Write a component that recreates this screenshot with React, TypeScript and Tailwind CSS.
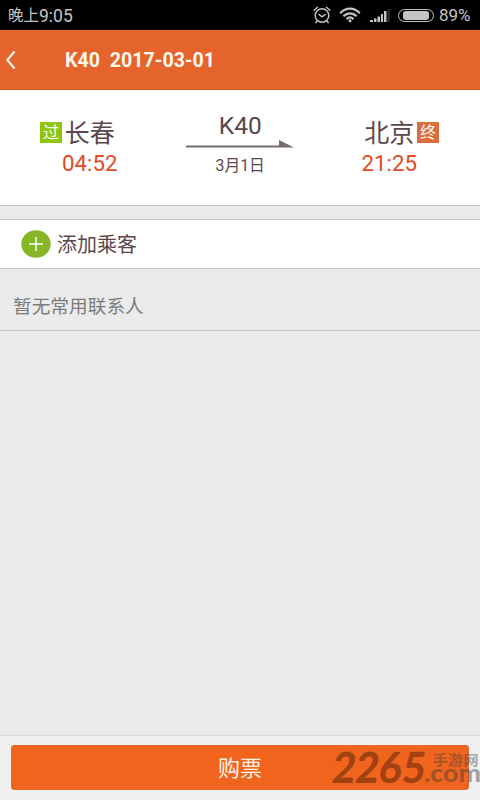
interface StationProps {
  name: string
  time: string
}

const trip = {
  train: 'K40',
  date: '2017-03-01',
  shortDate: '3月1日',
  from: { name: '长春', time: '04:52' },
  to: { name: '北京', time: '21:25' },
}

function StatusBar() {
  return (
    <div className="flex h-[30px] shrink-0 items-center bg-black pl-2 pr-[6px] text-[#c4c4c4]">
      <span className="flex items-center whitespace-nowrap leading-[30px]">
        <span className="pt-[3px] text-[15.5px] leading-[27px]">晚上</span>
        <span className="pt-[3px] text-[17.5px] leading-[27px]">9:05</span>
      </span>
      <div className="ml-auto flex items-center">
        <svg width="18" height="18" viewBox="0 0 18 18" fill="none" stroke="currentColor" strokeWidth="1.5" strokeLinecap="round">
          <circle cx="9" cy="9.5" r="6.8" />
          <path d="M6 8.5l3 2.3 3.2-2.3M1.2 4.2L4.5 1.3M16.8 4.2l-3.3-2.9M4.2 15l-1.4 1.6M13.8 15l1.4 1.6" />
        </svg>
        <svg className="ml-[8px]" width="22" height="16" viewBox="0 0 22 16" fill="none" stroke="currentColor" strokeWidth="2.2">
          <path d="M1.2 6.2C7 .2 15 .2 20.8 6.2M4.4 9.3c4-4 9.2-4 13.2 0M7.5 12.1c2.1-2 4.9-2 7 0" />
          <circle cx="11" cy="13.8" r="1.5" fill="currentColor" stroke="none" />
        </svg>
        <svg className="ml-[9px]" width="20" height="14" viewBox="0 0 20 14" fill="currentColor">
          <path d="M0 12h3v2H0zM4 10.500h2.500V14H4zM7.500 8.500H10V14H7.500zM11 6h2v8h-2zM14 3h2.500v11H14z" />
          <path d="M17.500 1h2v13h-2z" fill="#333" />
        </svg>
        <div className="ml-[8px] h-[13px] w-9 rounded-full border-[1.5px] border-[#c4c4c4] px-[4px] py-px">
          <div className="h-full rounded-[3px] bg-[#c4c4c4]" />
        </div>
        <span className="ml-[5px] w-[35px] whitespace-nowrap pt-px text-[17px] leading-[29px]">89%</span>
      </div>
    </div>
  )
}

function Header() {
  return (
    <header className="flex h-[60px] shrink-0 items-center border-b border-[#d55a22] bg-[#e4642b] text-[#fff8ee]">
      <svg className="ml-[5px]" width="12" height="20" viewBox="0 0 12 20" fill="none" stroke="currentColor" strokeWidth="2.1">
        <path d="M9.5 1.5L2.3 10l7.2 8.5" />
      </svg>
      <h1 className="ml-[48px] whitespace-pre pt-[2px] text-[19.6px] font-bold">
        {trip.train}
        {'  '}
        {trip.date}
      </h1>
    </header>
  )
}

function Station({ name, time }: StationProps) {
  return (
    <div className="flex flex-col items-center">
      <span className="text-[25px] leading-[34px]">{name}</span>
      <span className="text-[22.3px] leading-[25px] text-[#e34a25]">{time}</span>
    </div>
  )
}

function TripCard() {
  return (
    <section className="flex h-[116px] shrink-0 justify-between border-b border-[#c6c6c6] bg-white pl-[40px] pr-[41px] pt-[27px] text-[#5a474b]">
      <div className="flex w-[79px]">
        <span className="mt-[5px] flex h-[21px] w-[22px] shrink-0 items-center justify-center bg-[#8fc60c] text-[16px] leading-none text-white">过</span>
        <Station {...trip.from} />
      </div>
      <div className="-mt-[7px] flex w-[110px] flex-col items-center">
        <span className="text-[24.5px] leading-[32px]">{trip.train}</span>
        <svg className="-mt-[2px]" width="110" height="10" viewBox="0 0 110 10">
          <path d="M1 5.500h93V0l15 7.500H1z" fill="#746c70" />
        </svg>
        <span className="mt-[5px] text-[15.8px] leading-[22px]">{trip.shortDate}</span>
      </div>
      <div className="flex">
        <Station {...trip.to} />
        <span className="mt-[5px] flex h-[21px] w-[22px] shrink-0 items-center justify-center bg-[#d96d3d] text-[16px] leading-none text-white">终</span>
      </div>
    </section>
  )
}

function Watermark() {
  return (
    <svg className="pointer-events-none absolute bottom-0 right-0" width="150" height="70" viewBox="330 730 150 70">
      <g fontFamily="Lato" fontWeight="900" fill="#4a1d08" fillOpacity="0.48">
        <text transform="translate(331 782.500) skewX(-7)" fontSize="43" textLength="93" lengthAdjust="spacingAndGlyphs">2265</text>
        <text x="424" y="782" fontSize="24" textLength="57" lengthAdjust="spacingAndGlyphs" fill="#3c3c3c" fillOpacity="0.45">.com</text>
      </g>
      <text x="432.500" y="765" fontFamily="Noto Sans CJK SC" fontSize="14" fontWeight="700" textLength="46" lengthAdjust="spacingAndGlyphs" fill="#3c3c3c" fillOpacity="0.42">手游网</text>
    </svg>
  )
}

export default function App() {
  return (
    <div className="relative flex h-[800px] w-[480px] flex-col overflow-hidden bg-[#ebebeb] font-[Roboto,'Noto_Sans_CJK_SC',sans-serif]">
      <StatusBar />
      <Header />
      <TripCard />
      <button className="mt-[13px] flex h-[50px] shrink-0 items-center border-y border-[#c6c6c6] bg-white pl-[21px] text-[20px] text-[#5a474b]">
        <svg width="30" height="28" viewBox="0 0 30 28">
          <ellipse cx="15" cy="14" rx="14.700" ry="13.800" fill="#86b526" />
          <path d="M8 14h14M15 7v14" stroke="#fff" strokeWidth="1.4" />
        </svg>
        <span className="ml-[6px] pt-[2px]">添加乘客</span>
      </button>
      <div className="flex h-[62px] shrink-0 items-center border-b border-[#c6c6c6] pl-[13px] pt-[16px] text-[18.7px] text-[#7b7b7b]">
        暂无常用联系人
      </div>
      <footer className="mt-auto h-[65px] shrink-0 border-t border-[#d8dadb] bg-[#f0f0f0] px-[11px] pt-[9px]">
        <button className="flex h-[45px] w-full items-center justify-center rounded-[3px] border border-[#e06a32] bg-[#f1641e] pt-[2px] text-[22px] text-[#fff3e6]">
          购票
        </button>
      </footer>
      <Watermark />
    </div>
  )
}
